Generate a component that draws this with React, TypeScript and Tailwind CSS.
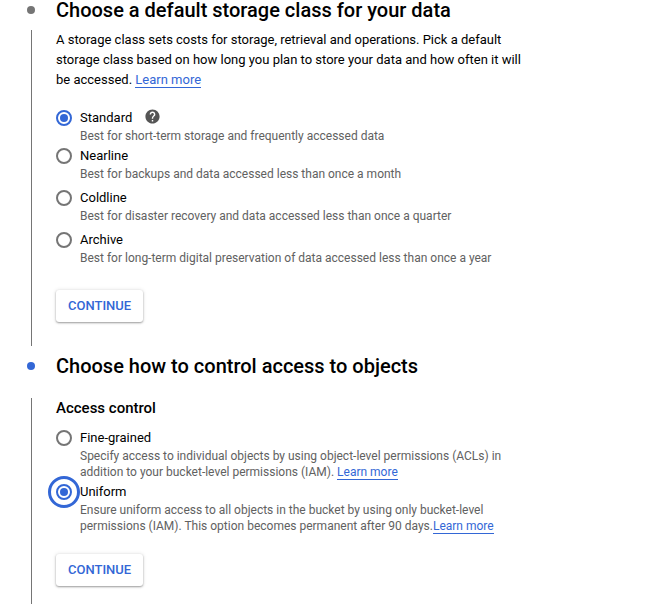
import type { ReactNode } from "react";
import { MdHelp } from "react-icons/md";

function LearnMore() {
  return (
    <a href="#learn-more" className="border-b border-[#3367d6] text-[#3367d6]">
      Learn more
    </a>
  );
}

type StepProps = {
  title: string;
  active?: boolean;
  children: ReactNode;
};

function Step({ title, active, children }: StepProps) {
  return (
    <section>
      <div className="flex items-center">
        <span className="flex w-14 shrink-0 pl-[27px]">
          <span
            className={
              active
                ? "size-2 rounded-full bg-[#3367d6]"
                : "size-2 rounded-full bg-[#757575]"
            }
          />
        </span>
        <h2 className="text-xl leading-5 font-medium">{title}</h2>
      </div>
      <div
        className={
          active
            ? "mt-[22px] ml-[31px] border-l border-[#757575] pb-6 pl-6"
            : "mt-2.5 ml-[31px] border-l border-[#757575] pb-6 pl-6"
        }
      >
        <div className="max-w-[470px]">{children}</div>
      </div>
    </section>
  );
}

type OptionProps = {
  name: string;
  id: string;
  label: string;
  checked?: boolean;
  focused?: boolean;
  help?: boolean;
  children: ReactNode;
};

function RadioOption({ name, id, label, checked, focused, help, children }: OptionProps) {
  return (
    <div>
      <div className="flex h-5 items-center">
        <input
          type="radio"
          id={id}
          name={name}
          defaultChecked={checked}
          aria-describedby={`${id}-hint`}
          className={
            focused
              ? "size-4 shrink-0 appearance-none rounded-full border-2 border-[#757575] bg-clip-content p-0.5 outline-3 outline-offset-5 outline-[#3367d6] checked:border-[#3367d6] checked:bg-[#3367d6]"
              : "size-4 shrink-0 appearance-none rounded-full border-2 border-[#757575] bg-clip-content p-0.5 checked:border-[#3367d6] checked:bg-[#3367d6]"
          }
        />
        <label htmlFor={id} className="pl-2 text-[13px] leading-5">
          {label}
        </label>
        {help && (
          <button type="button" aria-label={`Help for ${label}`} className="ml-3 pb-1 text-[#555555]">
            <MdHelp className="size-[17px]" />
          </button>
        )}
      </div>
      <p id={`${id}-hint`} className="pl-6 text-xs leading-4 text-[#616161]">
        {children}
      </p>
    </div>
  );
}

function ContinueButton() {
  return (
    <button
      type="button"
      className="h-8 rounded-[3px] bg-white px-3 text-[13px] font-medium text-[#3367d6] shadow-[0_1px_2px_rgba(0,0,0,0.35),0_0_4px_rgba(0,0,0,0.12)]"
    >
      CONTINUE
    </button>
  );
}

export default function App() {
  return (
    <main className="min-h-screen bg-white font-[Roboto,sans-serif] text-black">
      <form className="flex flex-col gap-2.5">
        <Step title="Choose a default storage class for your data">
          <p className="text-[13px] leading-5">
            A storage class sets costs for storage, retrieval and operations. Pick a default
            storage class based on how long you plan to store your data and how often it will be
            accessed. <LearnMore />
          </p>

          <div role="radiogroup" aria-label="Storage class" className="mt-[18px] mb-6 flex flex-col gap-1.5">
            <div className="flex flex-col gap-0.5">
              <RadioOption name="storage" id="standard" label="Standard" checked help>
                Best for short-term storage and frequently accessed data
              </RadioOption>
              <RadioOption name="storage" id="nearline" label="Nearline">
                Best for backups and data accessed less than once a month
              </RadioOption>
            </div>
            <RadioOption name="storage" id="coldline" label="Coldline">
              Best for disaster recovery and data accessed less than once a quarter
            </RadioOption>
            <RadioOption name="storage" id="archive" label="Archive">
              Best for long-term digital preservation of data accessed less than once a year
            </RadioOption>
          </div>

          <ContinueButton />
        </Step>

        <Step title="Choose how to control access to objects" active>
          <h3 className="text-[15px] leading-5 font-medium">Access control</h3>

          <div role="radiogroup" aria-label="Access control" className="mt-2.5 mb-5 flex flex-col gap-0.5">
            <RadioOption name="access" id="fine-grained" label="Fine-grained">
              Specify access to individual objects by using object-level permissions (ACLs) in
              addition to your bucket-level permissions (IAM). <LearnMore />
            </RadioOption>
            <RadioOption name="access" id="uniform" label="Uniform" checked focused>
              Ensure uniform access to all objects in the bucket by using only bucket-level
              permissions (IAM). This option becomes permanent after 90 days.
              <LearnMore />
            </RadioOption>
          </div>

          <ContinueButton />
        </Step>
      </form>
    </main>
  );
}
